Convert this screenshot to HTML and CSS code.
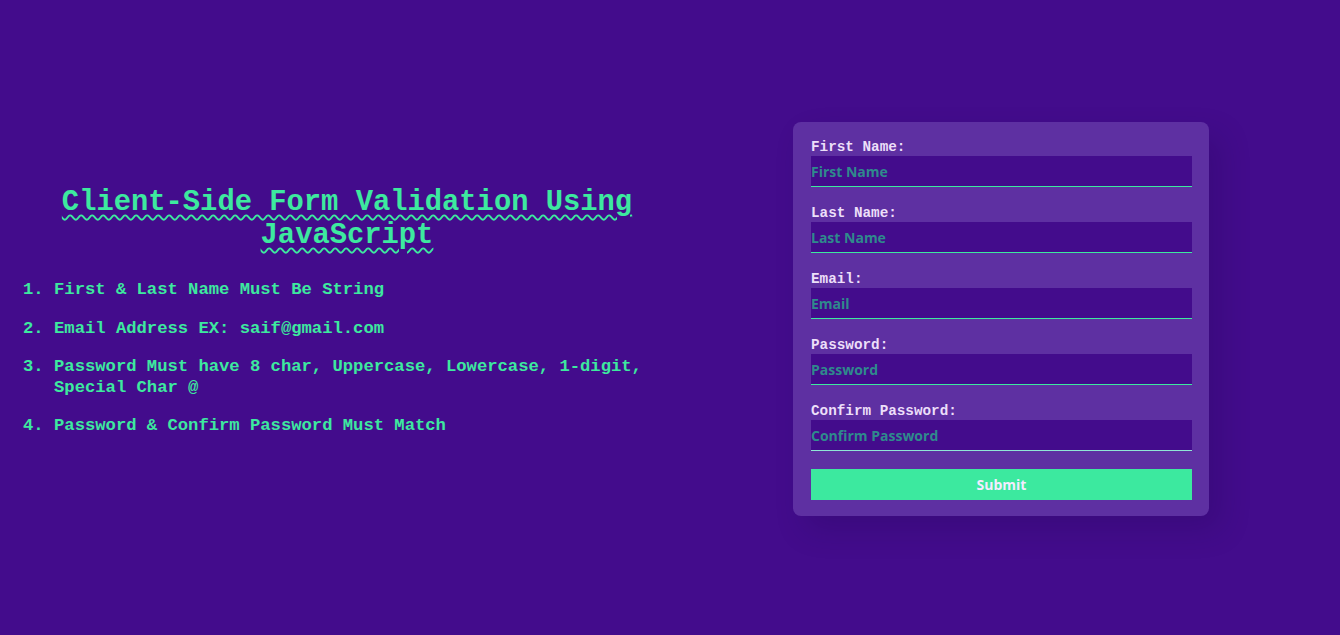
FILE: index.html
```html
<!DOCTYPE html>
<html lang="en">
<head>
<meta charset="utf-8">
<title>Client-Side Form Validation Using JavaScript</title>
<link rel="stylesheet" href="styles.css">
</head>
<body>
<main class="page">
  <section class="info">
    <h1 class="title">Client-Side Form Validation Using JavaScript</h1>
    <ol class="rules">
      <li>First &amp; Last Name Must Be String</li>
      <li>Email Address EX: saif@gmail.com</li>
      <li>Password Must have 8 char, Uppercase, Lowercase, 1-digit, Special Char @</li>
      <li>Password &amp; Confirm Password Must Match</li>
    </ol>
  </section>
  <form class="card">
    <div class="field">
      <label class="label" for="fn">First Name:</label>
      <input class="input" id="fn" type="text" placeholder="First Name">
    </div>
    <div class="field">
      <label class="label" for="ln">Last Name:</label>
      <input class="input" id="ln" type="text" placeholder="Last Name">
    </div>
    <div class="field">
      <label class="label" for="em">Email:</label>
      <input class="input" id="em" type="text" placeholder="Email">
    </div>
    <div class="field">
      <label class="label" for="pw">Password:</label>
      <input class="input" id="pw" type="password" placeholder="Password">
    </div>
    <div class="field">
      <label class="label" for="cpw">Confirm Password:</label>
      <input class="input input-soft" id="cpw" type="password" placeholder="Confirm Password">
    </div>
    <button class="submit" type="button">Submit</button>
  </form>
</main>
</body>
</html>
```
FILE: styles.css
```css
* { box-sizing: border-box; }
html, body { margin: 0; padding: 0; }
body {
  background: #430c8c;
  font-family: "Liberation Mono", "DejaVu Sans Mono", monospace;
}
.page {
  height: 635px;
  display: flex;
  align-items: center;
  padding-left: 14px;
  gap: 113px;
}
.info {
  width: 666px;
  padding-bottom: 12px;
}
.title {
  margin: 0 0 28px;
  text-align: center;
  font-size: 28.8px;
  line-height: 33px;
  font-weight: bold;
  color: #3de99f;
  text-decoration: underline wavy #3de99f;
  text-decoration-thickness: 2px;
  text-underline-offset: 4px;
}
.rules {
  margin: 0;
  padding-left: 40px;
  color: #3de99f;
  font-size: 17.2px;
  line-height: 20.5px;
  font-weight: bold;
}
.rules li { margin-bottom: 18px; }
.rules li:last-child { margin-bottom: 0; }
.card {
  width: 416px;
  margin-top: 3px;
  padding: 17px 17px 16px 18px;
  background: #5e30a2;
  border-radius: 8px;
  box-shadow: 12px 14px 30px rgba(20, 0, 60, 0.18);
  display: flex;
  flex-direction: column;
  gap: 18px;
}
.field { display: flex; flex-direction: column; }
.label {
  color: #ecdff9;
  font-size: 14.3px;
  line-height: 17px;
  font-weight: bold;
}
.input {
  height: 31px;
  border: none;
  border-bottom: 1px solid #3de99f;
  background: #430c8c;
  padding: 0;
  margin: 0;
  font-family: "Open Sans", "Noto Sans", sans-serif;
  font-size: 14px;
  font-weight: bold;
  color: #ecdff9;
  outline: none;
}
.input-soft { border-bottom-color: #8fe6d6; }
.input::placeholder { color: #2f8a8c; opacity: 1; }
.submit {
  height: 31px;
  border: none;
  background: #3ce99f;
  color: #f3ecff;
  font-family: "Open Sans", "Noto Sans", sans-serif;
  font-size: 14px;
  font-weight: bold;
  padding: 0;
  cursor: pointer;
}
```
